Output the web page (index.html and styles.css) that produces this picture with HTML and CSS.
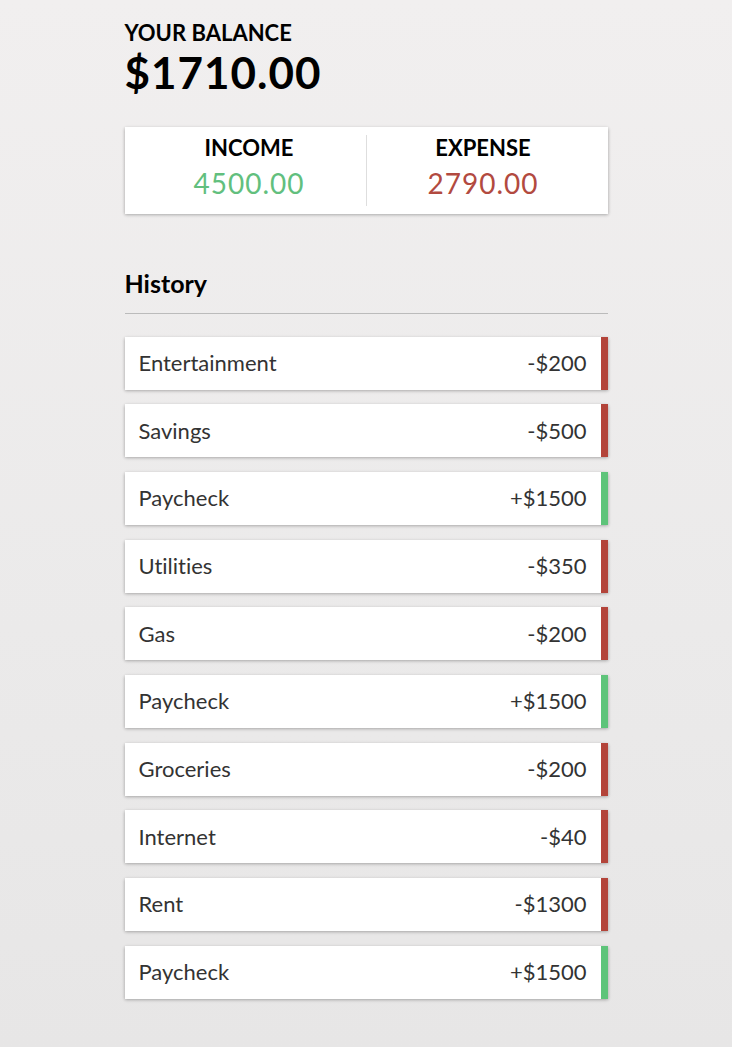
FILE: index.html
```html
<!DOCTYPE html>
<html lang="en">
<head>
<meta charset="UTF-8">
<title>Expense Tracker</title>
<link rel="stylesheet" href="styles.css">
</head>
<body>
<div class="container">
  <h4 class="label">Your Balance</h4>
  <h1 class="balance">$1710.00</h1>

  <div class="inc-exp">
    <div class="inc-exp-col">
      <h4 class="label">Income</h4>
      <p class="money plus">4500.00</p>
    </div>
    <div class="inc-exp-col">
      <h4 class="label">Expense</h4>
      <p class="money minus">2790.00</p>
    </div>
  </div>

  <h3 class="history-title">History</h3>
  <ul class="list">
    <li class="item minus"><span>Entertainment</span><span>-$200</span></li>
    <li class="item minus"><span>Savings</span><span>-$500</span></li>
    <li class="item plus"><span>Paycheck</span><span>+$1500</span></li>
    <li class="item minus"><span>Utilities</span><span>-$350</span></li>
    <li class="item minus"><span>Gas</span><span>-$200</span></li>
    <li class="item plus"><span>Paycheck</span><span>+$1500</span></li>
    <li class="item minus"><span>Groceries</span><span>-$200</span></li>
    <li class="item minus"><span>Internet</span><span>-$40</span></li>
    <li class="item minus"><span>Rent</span><span>-$1300</span></li>
    <li class="item plus"><span>Paycheck</span><span>+$1500</span></li>
  </ul>
</div>
</body>
</html>
```

FILE: styles.css
```css
* {
  box-sizing: border-box;
}

html, body {
  margin: 0;
  padding: 0;
}

body {
  min-height: 100vh;
  background: linear-gradient(180deg, #f1efef 0%, #ebeaea 60%, #e7e6e6 100%);
  font-family: Lato, "Noto Sans", sans-serif;
  font-variant-ligatures: none;
  color: #000;
}

.container {
  width: 483px;
  margin: 0 auto;
  padding-top: 20px;
}

.label {
  margin: 0;
  font-size: 22px;
  font-weight: 700;
  line-height: 1.2;
  text-transform: uppercase;
}

.balance {
  margin: 0;
  font-size: 44px;
  font-weight: 700;
  line-height: 1.2;
  letter-spacing: 1px;
}

.inc-exp {
  display: flex;
  margin: 27.5px 0 0;
  padding: 8px;
  background: #fff;
  box-shadow: 0 1.4px 4px rgba(0, 0, 0, 0.12), 0 1.4px 3px rgba(0, 0, 0, 0.24);
}

.inc-exp-col {
  flex: 1;
  text-align: center;
}

.inc-exp-col:first-child {
  border-right: 1px solid #dedede;
}

.money {
  margin: 5.5px 0;
  font-size: 28px;
  line-height: 1.2;
  letter-spacing: 1px;
}

.money.plus {
  color: #62bf7e;
}

.money.minus {
  color: #b24a40;
}

.history-title {
  margin: 54px 0 0;
  padding-bottom: 15px;
  border-bottom: 1px solid #bbb;
  font-size: 25px;
  font-weight: 700;
  line-height: 1.2;
}

.list {
  list-style: none;
  margin: 23px 0 40px;
  padding: 0;
}

.item {
  display: flex;
  justify-content: space-between;
  margin: 0 0 14.7px;
  padding: 13.3px 14px;
  background: #fff;
  color: #333;
  font-size: 22px;
  line-height: 1.2;
  box-shadow: 0 1.4px 4px rgba(0, 0, 0, 0.12), 0 1.4px 3px rgba(0, 0, 0, 0.24);
}

.item.plus {
  border-right: 7px solid #5ec47a;
}

.item.minus {
  border-right: 7px solid #b3443a;
}
```
